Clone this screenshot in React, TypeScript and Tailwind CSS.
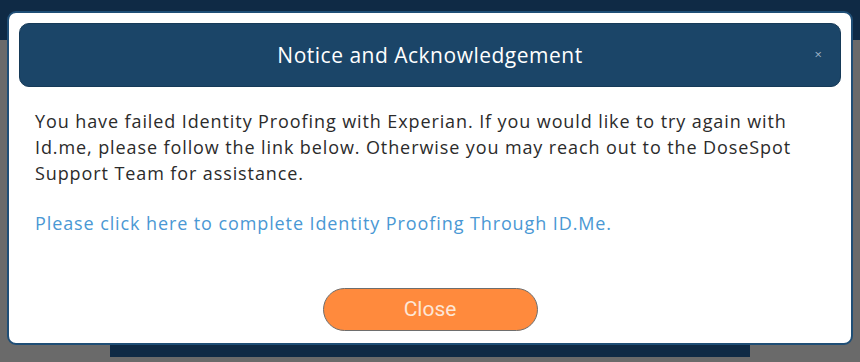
export default function App() {
  return (
    <div className="relative w-[860px] h-[362px] overflow-hidden bg-[#6a6a6a]">
      {/* backdrop page behind the dialog */}
      <div className="absolute left-0 top-0 w-[860px] h-[40px] bg-[#0f2a45]" />
      <div className="absolute left-[110px] bottom-[5px] w-[640px] h-[14px] bg-[#0f2a45]" />

      {/* dialog */}
      <div className="absolute left-[7px] top-[11px] w-[846px] h-[334px] rounded-[9px] border-2 border-[#1f4e76] bg-white p-[10px] flex flex-col">
        <div className="relative h-[64px] rounded-[10px] bg-[#1b4568] border border-[#163a58] flex items-center justify-center">
          <h1 className="font-['Open_Sans',sans-serif] text-[21px] tracking-[0.5px] text-white leading-none">
            Notice and Acknowledgement
          </h1>
          <span className="absolute right-[18px] top-[24px] text-[13px] leading-none text-[#9fb3c6] font-['Open_Sans',sans-serif]">
            ×
          </span>
        </div>

        <div className="px-[16px] pt-[21px] font-['Open_Sans',sans-serif] text-[18px] tracking-[0.9px] leading-[26px] text-[#2b2b2b] whitespace-nowrap">
          <p>
            You have failed Identity Proofing with Experian. If you would like to try again with
            <br />
            Id.me, please follow the link below. Otherwise you may reach out to the DoseSpot
            <br />
            Support Team for assistance.
          </p>
          <p className="mt-[24px] text-[#4a98d4]">
            Please click here to complete Identity Proofing Through ID.Me.
          </p>
        </div>

        <div className="mt-auto flex justify-center pb-[2px]">
          <button className="w-[215px] h-[43px] rounded-full bg-[#ff8a3d] border-[1.5px] border-[#6e6e6e] text-[#fde6d6] text-[21px] font-['Roboto',sans-serif] leading-none">
            Close
          </button>
        </div>
      </div>
    </div>
  );
}
